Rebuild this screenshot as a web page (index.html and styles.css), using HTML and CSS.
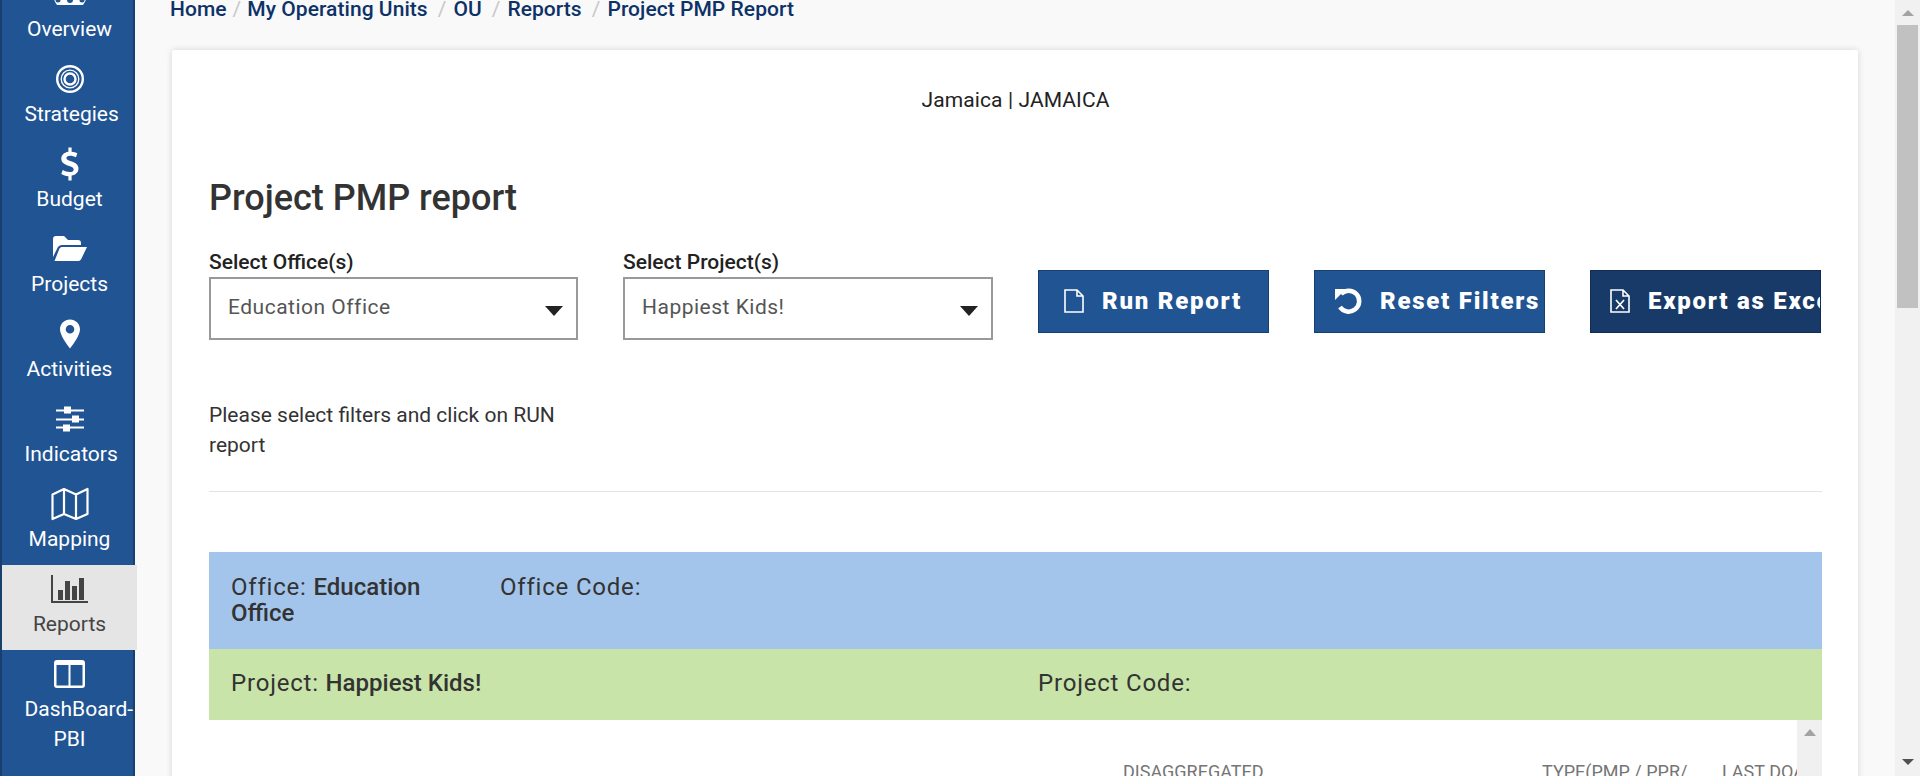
FILE: index.html
```html
<!DOCTYPE html>
<html lang="en">
<head>
    <meta charset="UTF-8">
    <meta name="viewport" content="width=device-width, initial-scale=1.0">
    <title>Project PMP Report</title>
    <link rel="stylesheet" href="styles.css">
</head>
<body>
    <div class="app">
        <nav class="sidebar">
            <a class="nav_item">
                <svg class="nav_icon" viewBox="0 0 34 30" width="34" height="30"><path fill="currentColor" d="M3 0h28c2 5 3 9 3 13 0 5-1 9-4 13H4C1 22 0 18 0 13 0 9 1 5 3 0z"/><circle cx="17" cy="21" r="3" fill="#215493"/><circle cx="5" cy="21" r="2.500" fill="#215493"/><circle cx="29" cy="21" r="2.500" fill="#215493"/></svg>
                <span>Overview</span>
            </a>
            <a class="nav_item">
                <svg class="nav_icon" viewBox="0 0 28 28" width="28" height="28"><g fill="none" stroke="currentColor"><circle cx="14" cy="14" r="12.800" stroke-width="2.400"/><circle cx="14" cy="14" r="8.800" stroke-width="1.300"/><circle cx="14" cy="14" r="5.500" stroke-width="2.400"/></g></svg>
                <span>Strategies</span>
            </a>
            <a class="nav_item">
                <svg class="nav_icon" viewBox="0 0 20 33" width="20" height="33"><path fill="currentColor" d="M8.400 0h3.200v4.200c2.300.2 4.200.8 5.700 1.600L16 9.700c-1.800-.9-3.800-1.500-5.900-1.500-2.500 0-3.700 1-3.700 2.300 0 1.500 1.400 2.200 4.600 3.200 4.400 1.400 7.500 3.200 7.500 7.300 0 3.700-2.600 6.300-6.900 7V33H8.400v-4.300c-2.700-.2-5.200-1-7.100-2.200l1.400-4c2.100 1.200 4.500 2 6.900 2 2.700 0 4.100-1 4.100-2.600 0-1.700-1.400-2.500-4.400-3.500C4.500 17 1.300 15.200 1.300 11.200c0-3.500 2.500-6.300 7.100-7z"/></svg>
                <span>Budget</span>
            </a>
            <a class="nav_item">
                <svg class="nav_icon" viewBox="0 0 34 26" width="34" height="26"><path fill="currentColor" d="M0 3a3 3 0 0 1 3-3h8l4 4h10a3 3 0 0 1 3 3v2H9c-2 0-3.500 1-4.300 2.600L0 21z"/><path fill="currentColor" d="M9.500 11H34l-6 12.500a4 4 0 0 1-3.400 1.500H1.500l5-12.400c.5-1 1.600-1.600 3-1.600z"/></svg>
                <span>Projects</span>
            </a>
            <a class="nav_item">
                <svg class="nav_icon" viewBox="0 0 20 29" width="20" height="29"><path fill="currentColor" fill-rule="evenodd" d="M10 0c5.500 0 10 4.300 10 9.800C20 16 13 25 10 29 7 25 0 16 0 9.800 0 4.300 4.500 0 10 0zm0 5.500a4.300 4.300 0 1 0 0 8.600 4.300 4.300 0 0 0 0-8.600z"/></svg>
                <span>Activities</span>
            </a>
            <a class="nav_item">
                <svg class="nav_icon" viewBox="0 0 28 25" width="28" height="25"><path fill="currentColor" d="M0 3h28v2H0zM0 12h28v2H0zM0 20h28v2H0z"/><path fill="currentColor" d="M8 0h7v7H8zM16 9h7v7h-7zM7 18h7v7H7z"/></svg>
                <span>Indicators</span>
            </a>
            <a class="nav_item">
                <svg class="nav_icon" viewBox="0 0 38 34" width="38" height="34"><path fill="none" stroke="currentColor" stroke-width="2.200" stroke-linejoin="round" d="M1.500 7.500 13 2l12 5.500L36.500 2v25L25 32l-12-5-11.500 5zM13 2v25M25 7.500V32"/></svg>
                <span>Mapping</span>
            </a>
            <a class="nav_item nav_active">
                <svg class="nav_icon" viewBox="0 0 37 28" width="37" height="28"><path fill="currentColor" d="M0 0h2v26h35v2H0zM7 15h5v10H7zM14 6h5v19h-5zM21 11h5v14h-5zM28 3h5v22h-5z"/></svg>
                <span>Reports</span>
            </a>
            <a class="nav_item">
                <svg class="nav_icon" viewBox="0 0 31 28" width="31" height="28"><path fill="currentColor" fill-rule="evenodd" d="M3 0h25a3 3 0 0 1 3 3v22a3 3 0 0 1-3 3H3a3 3 0 0 1-3-3V3a3 3 0 0 1 3-3zm-.5 5v20.500H14.500V5zM16.500 5v20.500h12V5z"/></svg>
                <span>DashBoard-PBI</span>
            </a>
        </nav>

        <main class="content">
            <div class="breadcrumb">
                <a>Home</a><i>/</i><a>My Operating Units</a><i class="wide">/</i><a>OU</a><i class="wide">/</i><a>Reports</a><i class="wide">/</i><a>Project PMP Report</a>
            </div>

            <section class="card">
                <p class="org_name">Jamaica | JAMAICA</p>
                <h1>Project PMP report</h1>

                <div class="filters">
                    <div class="filter">
                        <label>Select Office(s)</label>
                        <div class="select_box"><span>Education Office</span><b class="caret"></b></div>
                    </div>
                    <div class="filter">
                        <label>Select Project(s)</label>
                        <div class="select_box"><span>Happiest Kids!</span><b class="caret"></b></div>
                    </div>
                    <button class="btn btn_run">
                        <svg viewBox="0 0 20 24" width="20" height="24"><path fill="none" stroke="currentColor" stroke-width="1.600" d="M1 1h12l6 6v16H1zM13 1v6h6"/></svg>
                        Run Report
                    </button>
                    <button class="btn btn_reset">
                        <svg viewBox="0 0 28 28" width="28" height="28"><path fill="none" stroke="currentColor" stroke-width="4.500" d="M7 7a10.500 10.500 0 1 1-1 13"/><path fill="currentColor" d="M1 2h11L1 13z"/></svg>
                        Reset Filters
                    </button>
                    <button class="btn btn_export">
                        <svg viewBox="0 0 20 24" width="20" height="24"><path fill="none" stroke="currentColor" stroke-width="1.600" d="M1 1h12l6 6v16H1zM13 1v6h6"/><path fill="none" stroke="currentColor" stroke-width="1.700" d="m6 11 8 9M14 11l-8 9"/></svg>
                        Export as Excel
                    </button>
                </div>

                <p class="hint">Please select filters and click on RUN report</p>
                <hr>

                <div class="band band_office">
                    <div class="office_name">Office: <b>Education Office</b></div>
                    <div>Office Code:</div>
                </div>
                <div class="band band_project">
                    <div class="project_name">Project: <b>Happiest Kids!</b></div>
                    <div>Project Code:</div>
                </div>

                <div class="report_table">
                    <div class="table_head">
                        <span></span>
                        <span>DISAGGREGATED</span>
                        <span>TYPE(PMP / PPR/</span>
                        <span>LAST DOA</span>
                    </div>
                    <div class="inner_scroll"><b></b></div>
                </div>
            </section>
        </main>

        <div class="page_scroll">
            <b class="arrow_up"></b>
            <div class="thumb"></div>
            <b class="arrow_down"></b>
        </div>
    </div>
</body>
</html>
```

FILE: styles.css
```css
* {
    box-sizing: border-box;
}

body {
    margin: 0;
    background: #f9f9f9;
    font-family: Roboto, "Liberation Sans", sans-serif;
    color: #333333;
}

.app {
    display: flex;
    height: 776px;
    overflow: hidden;
}

/* left nav */
.sidebar {
    flex: 0 0 135px;
    height: 776px;
    background: #215493;
    border-left: 2px solid #17406f;
    border-right: 2px solid #17406f;
    position: relative;
    z-index: 1;
}

.nav_item {
    display: flex;
    flex-direction: column;
    align-items: center;
    height: 85px;
    margin-right: -4px;
    padding-top: 7px;
    color: #ffffff;
    font-size: 21px;
    line-height: 30px;
    text-align: center;
}

.nav_item:first-child {
    margin-top: -30px;
}

.nav_icon {
    height: 34px;
    flex: 0 0 34px;
    margin-bottom: 3px;
}

.nav_item span {
    display: block;
    width: 90px;
}

.nav_active {
    background: #e5e5e5;
    color: #444444;
}

/* content */
.content {
    flex: 1;
    min-width: 0;
    padding: 0 37px;
}

.breadcrumb {
    height: 50px;
    margin-left: -2px;
    font-size: 21px;
    font-weight: 500;
    letter-spacing: 0.05px;
    line-height: 19px;
    color: #0d3268;
    white-space: nowrap;
}

.breadcrumb i {
    font-style: normal;
    font-weight: 400;
    color: #c8c8c8;
    margin: 0 6px;
}

.breadcrumb i.wide {
    margin: 0 7px 0 10px;
}

.card {
    background: #ffffff;
    box-shadow: 0 0 6px rgba(0, 0, 0, 0.15);
    padding: 0 36px 0 37px;
    height: 900px;
    border-radius: 2px;
}

.org_name {
    margin: 0;
    padding-top: 38px;
    text-align: center;
    font-size: 21px;
    letter-spacing: 0.1px;
    line-height: 25px;
    color: #222222;
}

h1 {
    margin: 63px 0 0;
    font-size: 36px;
    line-height: 44px;
    font-weight: 500;
}

.filters {
    display: flex;
    align-items: flex-end;
    margin-top: 30px;
    width: 1613px;
    overflow: hidden;
}

.filter {
    flex: 0 0 369px;
    margin-right: 45px;
}

.filter:nth-child(2) {
    flex-basis: 370px;
}

.filter label {
    display: block;
    font-size: 21px;
    font-weight: 500;
    line-height: 25px;
    margin-bottom: 2px;
    color: #222222;
}

.select_box {
    display: flex;
    align-items: center;
    justify-content: space-between;
    height: 63px;
    border: 2px solid #999999;
    padding: 0 13px 0 17px;
    font-size: 21px;
    color: #555555;
    letter-spacing: 0.5px;
}

.select_box span {
    padding-bottom: 4px;
}

.caret {
    width: 0;
    height: 0;
    margin-top: 5px;
    border-left: 9px solid transparent;
    border-right: 9px solid transparent;
    border-top: 10px solid #222222;
}

.btn {
    flex: 0 0 231px;
    display: flex;
    align-items: center;
    gap: 18px;
    height: 63px;
    margin: 0 45px 7px 0;
    padding-bottom: 2px;
    background: #215493;
    border: 1px solid #17406f;
    color: #ffffff;
    font-family: inherit;
    font-size: 24px;
    font-weight: 900;
    letter-spacing: 1.75px;
    white-space: nowrap;
    overflow: hidden;
}

.btn svg {
    flex-shrink: 0;
}

.btn_run {
    padding-left: 25px;
}

.btn_reset {
    padding-left: 19px;
}

.btn_export {
    padding-left: 19px;
    background: #173a68;
    margin-right: 0;
    border-color: #122c50;
}

.hint {
    width: 369px;
    margin: 60px 0 0;
    font-size: 21px;
    line-height: 30px;
    color: #333333;
}

hr {
    width: 1613px;
    margin: 31px 0 0;
    border: 0;
    border-top: 1px solid #e3e3e3;
}

.band {
    display: flex;
    width: 1613px;
    padding: 22px;
    font-size: 24px;
    line-height: 26px;
    letter-spacing: 0.8px;
}

.band b {
    font-weight: 500;
    letter-spacing: 0;
}

.band_office {
    margin-top: 60px;
    height: 97px;
    background: #a4c5eb;
}

.office_name {
    width: 269px;
    padding-right: 40px;
}

.band_project {
    height: 71px;
    padding-top: 21px;
    background: #c8e4a8;
}

.project_name {
    width: 807px;
}

.report_table {
    position: relative;
    width: 1613px;
    height: 300px;
    font-size: 18px;
    line-height: 22px;
    color: #757575;
}

.table_head {
    display: grid;
    grid-template-columns: 914px 419px 180px 75px;
    width: 1588px;
    padding-top: 41px;
    white-space: nowrap;
    overflow: hidden;
}

.table_head span:nth-child(2) {
    grid-column: 2;
}

.inner_scroll {
    position: absolute;
    top: 0;
    right: 0;
    width: 25px;
    height: 100%;
    background: #f0f0f0;
}

.inner_scroll b {
    position: absolute;
    top: 9px;
    left: 7px;
    border-left: 6px solid transparent;
    border-right: 6px solid transparent;
    border-bottom: 7px solid #a3a3a3;
}

/* page scrollbar */
.page_scroll {
    flex: 0 0 25px;
    position: relative;
    background: #f1f1f1;
}

.thumb {
    position: absolute;
    top: 25px;
    left: 2px;
    width: 21px;
    height: 283px;
    background: #c1c1c1;
}

.arrow_up,
.arrow_down {
    position: absolute;
    left: 7px;
    border-left: 6px solid transparent;
    border-right: 6px solid transparent;
}

.arrow_up {
    top: 10px;
    border-bottom: 6px solid #a3a3a3;
}

.arrow_down {
    top: 759px;
    border-top: 6px solid #505050;
}
```
